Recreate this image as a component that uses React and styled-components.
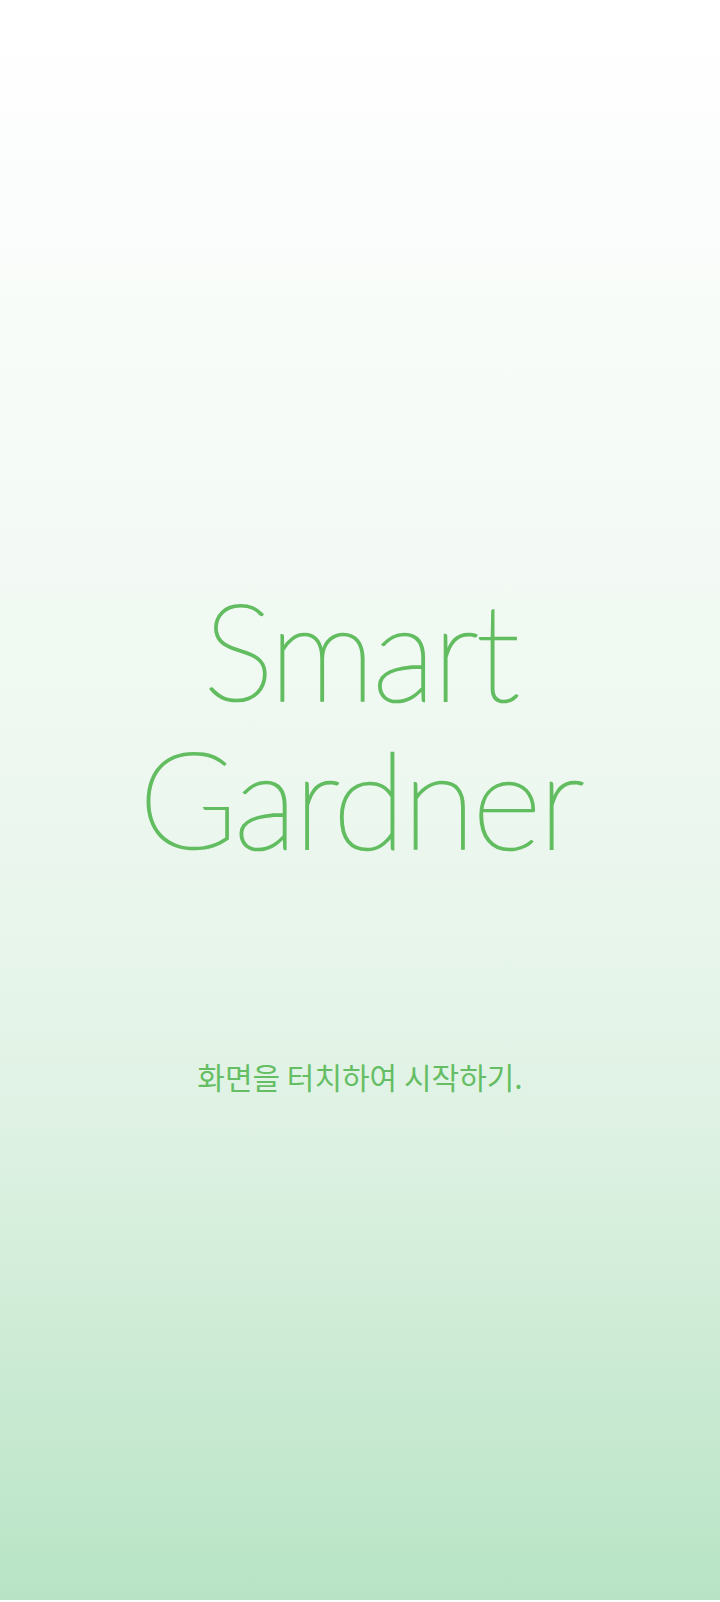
import React from "react";
import styled, { createGlobalStyle } from "styled-components";

const Global = createGlobalStyle`
  html, body { margin: 0; padding: 0; background: #ffffff; }
  #root { width: 720px; }
`;

const Screen = styled.main`
  width: 720px;
  height: 1600px;
  display: flex;
  flex-direction: column;
  align-items: center;
  background: linear-gradient(
    to bottom,
    #ffffff 0%,
    #f8fcf9 20%,
    #f1f9f3 40%,
    #e9f6ec 57%,
    #dff2e4 70%,
    #d0ecd7 82%,
    #c4e8ce 91%,
    #b8e4c5 100%
  );
  cursor: pointer;
`;

const Title = styled.h1`
  margin: 576px 0 0;
  font-family: "Lato", "Liberation Sans", sans-serif;
  font-weight: 100;
  font-size: 134px;
  line-height: 148px;
  color: #62bd60;
  -webkit-text-stroke: 2.2px #62bd60;
  text-align: center;
  letter-spacing: -3px;
`;

const Line = styled.span`
  display: block;
`;

const Hint = styled.p`
  margin: 182px 0 0;
  font-family: "Noto Sans CJK KR", "Noto Sans", sans-serif;
  font-weight: 400;
  font-size: 30px;
  color: #66be64;
`;

export default function App() {
  return (
    <>
      <Global />
      <Screen>
        <Title>
          <Line>Smart</Line>
          <Line>Gardner</Line>
        </Title>
        <Hint>화면을 터치하여 시작하기.</Hint>
      </Screen>
    </>
  );
}
